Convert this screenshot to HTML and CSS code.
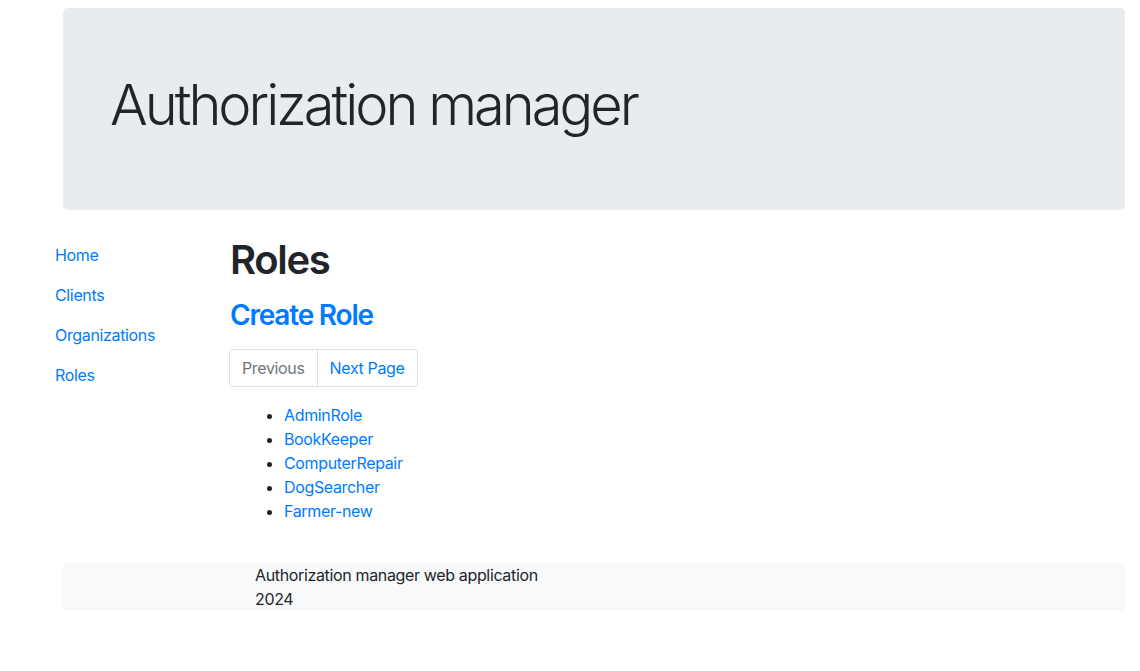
FILE: index.html
```html
<!DOCTYPE html>
<html lang="en">
<head>
<meta charset="utf-8">
<title>Authorization manager</title>
<link rel="stylesheet" href="styles.css">
</head>
<body>
<header class="jumbotron">
  <div class="jumbo-inner">
    <h1 class="display">Authorization manager</h1>
  </div>
</header>
<div class="layout">
  <nav class="sidebar">
    <a href="#" class="nav-link">Home</a>
    <a href="#" class="nav-link">Clients</a>
    <a href="#" class="nav-link">Organizations</a>
    <a href="#" class="nav-link">Roles</a>
  </nav>
  <main class="content">
    <h1 class="page-title">Roles</h1>
    <h3 class="create"><a href="#">Create Role</a></h3>
    <div class="pagination">
      <span class="page-link disabled">Previous</span>
      <a href="#" class="page-link">Next Page</a>
    </div>
    <ul class="role-list">
      <li><a href="#">AdminRole</a></li>
      <li><a href="#">BookKeeper</a></li>
      <li><a href="#">ComputerRepair</a></li>
      <li><a href="#">DogSearcher</a></li>
      <li><a href="#">Farmer-new</a></li>
    </ul>
  </main>
</div>
<footer class="footer">
  <div class="footer-inner">
    <div>Authorization manager web application</div>
    <div>2024</div>
  </div>
</footer>
</body>
</html>
```

FILE: styles.css
```css
* { box-sizing: border-box; }
html, body { margin: 0; padding: 0; }
body {
  font-family: Inter, "Noto Sans", sans-serif;
  font-size: 16px;
  line-height: 24px;
  letter-spacing: -0.35px;
  color: #212529;
  background: #fff;
  padding-top: 8px;
}
a { color: #007bff; text-decoration: none; }

.jumbotron {
  margin: 0 15px 0 63px;
  height: 202px;
  background: #e9ecef;
  border-radius: 4.8px;
  padding: 64px 32px;
}
.jumbo-inner { padding: 0 15px; }
.display {
  margin: 0;
  font-size: 56px;
  font-weight: 300;
  line-height: 67px;
  letter-spacing: -3px;
}

.layout {
  display: flex;
  margin-top: 24px;
}
.sidebar {
  width: 230px;
  padding: 9px 0 0 55px;
  display: flex;
  flex-direction: column;
  gap: 16px;
}
.nav-link { display: block; line-height: 24px; }

.content { flex: 1; }
.page-title {
  margin: 2px 0 14px;
  font-size: 40px;
  font-weight: 600;
  line-height: 48px;
  letter-spacing: -1.3px;
}
.create {
  margin: 0 0 17px;
  font-size: 28px;
  font-weight: 600;
  line-height: 34px;
  letter-spacing: -1.2px;
}
.pagination {
  display: inline-flex;
  margin-left: -1px;
  border-radius: 4px;
}
.page-link {
  display: block;
  padding: 6px 12px;
  line-height: 24px;
  border: 1px solid #dee2e6;
  background: #fff;
}
.page-link + .page-link { margin-left: -1px; border-radius: 0 4px 4px 0; }
.page-link:first-child { border-radius: 4px 0 0 4px; }
.page-link.disabled { color: #6c757d; }

.role-list {
  margin: 16px 0 40px;
  padding-left: 54px;
}

.footer {
  margin: 0 15px 0 63px;
  background: #f8f9fa;
}
.footer-inner { padding-left: 192px; }
```
